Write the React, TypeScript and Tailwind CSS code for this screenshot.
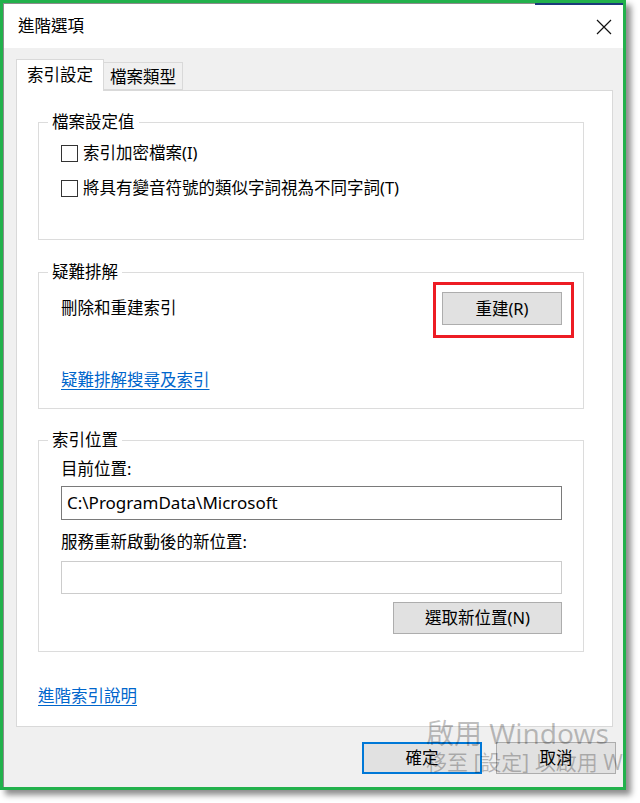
import type { ReactNode } from 'react'

const FONT = '"Noto Sans", "Noto Sans CJK TC", sans-serif'

function GroupBox({ title, children, className = '' }: { title: string; children: ReactNode; className?: string }) {
  return (
    <fieldset className={`border border-[#dcdcdc] ${className}`}>
      <legend className="ml-[9px] px-[4px] leading-[20px]">{title}</legend>
      {children}
    </fieldset>
  )
}

function CheckRow({ label }: { label: string }) {
  return (
    <div className="flex h-[24px] items-center">
      <span className="h-[17px] w-[17px] border border-[#333] bg-white" />
      <span className="ml-[5px] leading-[20px]">{label}</span>
    </div>
  )
}

function Button({ label, className = '', primary = false }: { label: string; className?: string; primary?: boolean }) {
  return (
    <button
      className={`flex items-center justify-center bg-[#e1e1e1] leading-[20px] text-black ${
        primary ? 'border-2 border-[#0078d7]' : 'border border-[#adadad]'
      } ${className}`}
    >
      {label}
    </button>
  )
}

export default function App() {
  return (
    <div className="h-[803px] w-[640px] bg-white" style={{ fontFamily: FONT }}>
      <div className="relative h-[790px] w-[626px] overflow-hidden border-[3px] border-[#22b14c] text-[16.5px] text-black shadow-[5px_5px_6px_rgba(0,0,0,0.45)]">
        <div className="flex h-full flex-col border-l border-t border-[#8c8c8c]">
          {/* Title bar */}
          <div className="relative flex h-[44px] flex-none items-center justify-between bg-white pl-[14px] pr-[11px]">
            <div className="absolute right-0 top-[-1px] h-[2px] w-[88px] bg-[#1c3a7a]" />
            <span className="leading-[20px]">進階選項</span>
            <svg width="16" height="16" viewBox="0 0 16 16" className="mt-[1px]">
              <path d="M1 1 L15 15 M15 1 L1 15" stroke="#111" strokeWidth="1.2" fill="none" />
            </svg>
          </div>

          {/* Body */}
          <div className="flex flex-1 flex-col bg-[#f0f0f0] pl-[12px] pr-[10px] pt-[11px]">
            {/* Tabs */}
            <div className="flex h-[31px] items-end">
              <div className="relative z-10 -mb-px flex h-[32px] w-[88px] items-center justify-center border border-b-0 border-[#d9d9d9] bg-white pb-[1px]">
                索引設定
              </div>
              <div className="flex h-[28px] w-[79px] items-center justify-center border border-l-0 border-[#d9d9d9] bg-[#f0f0f0] pt-[3px]">
                檔案類型
              </div>
            </div>

            {/* Panel */}
            <div className="flex h-[637px] flex-none flex-col border border-[#d9d9d9] bg-white pl-[21px] pr-[28px] pt-[21px]">
              <GroupBox title="檔案設定值">
                <div className="flex flex-col gap-[11px] pb-[39px] pl-[22px] pt-[9px]">
                  <CheckRow label="索引加密檔案(I)" />
                  <CheckRow label="將具有變音符號的類似字詞視為不同字詞(T)" />
                </div>
              </GroupBox>

              <GroupBox title="疑難排解" className="mt-[22px]">
                <div className="flex flex-col pb-[18px] pl-[22px] pr-[9px]">
                  <div className="flex h-[56px] items-start justify-between">
                    <span className="pt-[16px] leading-[20px]">刪除和重建索引</span>
                    <div className="h-[56px] w-[141px] border-[3px] border-[#ed1c24] pl-[6px] pt-[7px]">
                      <Button label="重建(R)" className="h-[33px] w-[120px]" />
                    </div>
                  </div>
                  <a className="mt-[32px] self-start leading-[20px] text-[#0066cc] underline underline-offset-[3px]">
                    疑難排解搜尋及索引
                  </a>
                </div>
              </GroupBox>

              <GroupBox title="索引位置" className="mt-[21px]">
                <div className="flex flex-col pb-[17px] pl-[22px] pr-[21px]">
                  <span className="mt-[9px] leading-[20px]">目前位置:</span>
                  <div className="mt-[7px] flex h-[34px] items-center border border-[#7a7a7a] bg-white pl-[5px] text-[17px]">
                    C:\ProgramData\Microsoft
                  </div>
                  <span className="mt-[12px] leading-[20px]">服務重新啟動後的新位置:</span>
                  <div className="mt-[9px] h-[33px] border border-[#cccccc] bg-white" />
                  <Button label="選取新位置(N)" className="mt-[8px] h-[32px] w-[169px] self-end" />
                </div>
              </GroupBox>

              <a className="mt-[34px] self-start leading-[20px] text-[#0066cc] underline underline-offset-[3px]">
                進階索引說明
              </a>
            </div>

            {/* Dialog buttons */}
            <div className="-mr-[3px] mt-[15px] flex justify-end gap-[14px]">
              <Button label="確定" primary className="h-[32px] w-[120px]" />
              <Button label="取消" className="h-[32px] w-[120px]" />
            </div>
          </div>
        </div>

        {/* Activation watermark */}
        <div className="pointer-events-none absolute left-[423px] top-[714px] whitespace-nowrap text-black/25">
          <div className="text-[28px] leading-[32px]">啟用 Windows</div>
          <div className="text-[21px] leading-[26px]">移至 [設定] 以啟用 Windows</div>
        </div>
      </div>
    </div>
  )
}
